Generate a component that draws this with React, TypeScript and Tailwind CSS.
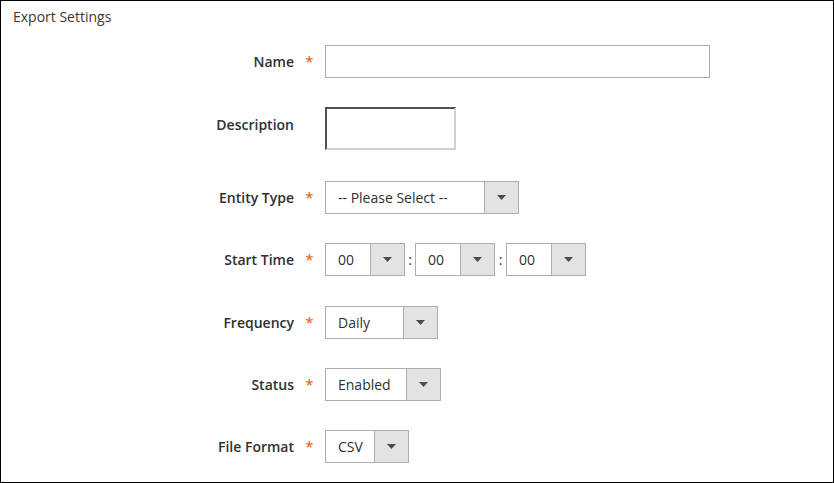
import React from "react";

const font = { fontFamily: '"Open Sans", "Liberation Sans", sans-serif' };

function Arrow() {
  return (
    <svg width="9" height="5" viewBox="0 0 9 5" className="block">
      <path d="M0 0 L9 0 L4.5 5 Z" fill="#514943" />
    </svg>
  );
}

function Select({ value, width }: { value: string; width: string }) {
  return (
    <div className={`flex h-[33px] border border-[#adadad] bg-white ${width}`}>
      <div className="flex flex-1 items-center pl-3 text-[14px] text-[#303030]">{value}</div>
      <div className="flex w-[34px] items-center justify-center border-l border-[#adadad] bg-[#e3e3e3]">
        <Arrow />
      </div>
    </div>
  );
}

function Row({
  label,
  required = true,
  className = "",
  labelClass = "",
  children,
}: {
  label: string;
  required?: boolean;
  className?: string;
  labelClass?: string;
  children: React.ReactNode;
}) {
  return (
    <div className={`flex items-center ${className}`}>
      <div className={`w-[293px] text-right text-[14px] font-semibold text-[#303030] ${labelClass}`}>{label}</div>
      <div className="w-[31px] text-center text-[15px] text-[#eb5202]">{required ? "*" : ""}</div>
      {children}
    </div>
  );
}

export default function App() {
  return (
    <div style={font} className="h-[483px] w-[834px] border border-black bg-white">
      <div className="pl-3 pt-[6px] text-[14px] leading-5 text-[#41362f]">Export Settings</div>

      <Row label="Name" className="mt-[18px]">
        <div className="h-[33px] w-[385px] border border-[#adadad] bg-white" />
      </Row>

      <Row label="Description" required={false} className="mt-[29px] !items-start" labelClass="pt-[7px]">
        <div className="h-[43px] w-[131px] border-2 border-b-[#d4d0c8] border-l-[#505050] border-r-[#d4d0c8] border-t-[#505050] bg-white" />
      </Row>

      <Row label="Entity Type" className="mt-[31px]">
        <Select value="-- Please Select --" width="w-[194px]" />
      </Row>

      <Row label="Start Time" className="mt-[29px]">
        <div className="flex items-center">
          <Select value="00" width="w-[80px]" />
          <span className="w-[10px] text-center text-[14px] text-[#303030]">:</span>
          <Select value="00" width="w-[80px]" />
          <span className="w-[11px] text-center text-[14px] text-[#303030]">:</span>
          <Select value="00" width="w-[80px]" />
        </div>
      </Row>

      <Row label="Frequency" className="mt-[30px]">
        <Select value="Daily" width="w-[113px]" />
      </Row>

      <Row label="Status" className="mt-[29px]">
        <Select value="Enabled" width="w-[116px]" />
      </Row>

      <Row label="File Format" className="mt-[29px]">
        <Select value="CSV" width="w-[84px]" />
      </Row>
    </div>
  );
}
